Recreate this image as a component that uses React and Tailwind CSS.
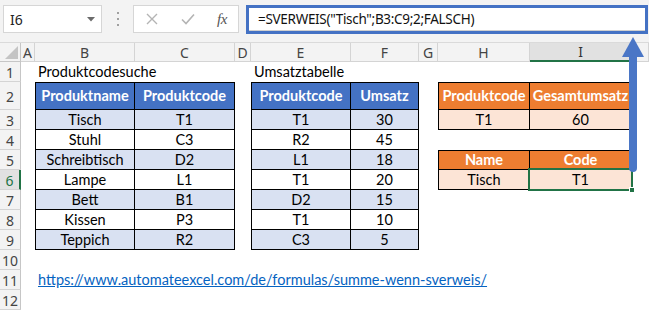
import React from "react";

const COLS = ["A", "B", "C", "D", "E", "F", "G", "H", "I", ""];

// cell content per row (index 0 = column A ... 9 = column J)
const cells = {
  1: { 1: { t: "Produktcodesuche", k: "title" }, 4: { t: "Umsatztabelle", k: "title" } },
  2: {
    1: { t: "Produktname", k: "bh", l: true, top: true },
    2: { t: "Produktcode", k: "bh", top: true },
    4: { t: "Produktcode", k: "bh", l: true, top: true },
    5: { t: "Umsatz", k: "bh", top: true },
    7: { t: "Produktcode", k: "oh", l: true, top: true },
    8: { t: "Gesamtumsatz", k: "oh", top: true },
  },
  3: { 7: { t: "T1", k: "ob", l: true }, 8: { t: "60", k: "ob" } },
  5: {
    7: { t: "Name", k: "oh", l: true, top: true },
    8: { t: "Code", k: "oh", top: true },
  },
  6: { 7: { t: "Tisch", k: "ob", l: true }, 8: { t: "T1", k: "ob", sel: true } },
  11: { 1: { t: "https://www.automateexcel.com/de/formulas/summe-wenn-sverweis/", k: "link" } },
};

const left = [
  ["Tisch", "T1"],
  ["Stuhl", "C3"],
  ["Schreibtisch", "D2"],
  ["Lampe", "L1"],
  ["Bett", "B1"],
  ["Kissen", "P3"],
  ["Teppich", "R2"],
];
const right = [
  ["T1", "30"],
  ["R2", "45"],
  ["L1", "18"],
  ["T1", "20"],
  ["D2", "15"],
  ["T1", "10"],
  ["C3", "5"],
];
left.forEach((r, i) => {
  const row = i + 3;
  const k = i % 2 === 0 ? "b1" : "b2";
  cells[row] = cells[row] || {};
  cells[row][1] = { t: r[0], k, l: true };
  cells[row][2] = { t: r[1], k };
  cells[row][4] = { t: right[i][0], k, l: true };
  cells[row][5] = { t: right[i][1], k };
});

const kindClass = {
  title: "justify-start pl-[3px] text-[#000]",
  link: "justify-start pl-[3px] text-[#0563c1] underline",
  bh: "justify-center bg-[#4472c4] text-white font-bold border-r border-b border-black",
  b1: "justify-center bg-[#d9e1f2] text-black border-r border-b border-black",
  b2: "justify-center bg-white text-black border-r border-b border-black",
  oh: "justify-center bg-[#ed7d31] text-white font-bold border-r border-b border-black",
  ob: "justify-center bg-[#fce4d6] text-black border-r border-b border-black",
};

function Cell({ c }) {
  if (!c) return <div />;
  const cls = [
    "relative flex items-center whitespace-nowrap overflow-visible text-[14.5px] leading-none",
    kindClass[c.k],
    c.l ? "border-l" : "",
    c.top ? "border-t" : "",
    c.k === "bh" || c.k === "oh" || c.k === "b1" || c.k === "b2" || c.k === "ob" ? "pt-[1px]" : "",
  ].join(" ");
  return (
    <div className={cls}>
      <span>{c.t}</span>
      {c.sel && (
        <>
          <div className="absolute -left-[2px] -top-[2px] -right-[2px] -bottom-[2px] border-2 border-[#217346]" />
          <div className="absolute -right-[4px] -bottom-[4px] w-[6px] h-[6px] bg-[#217346] border border-white" />
        </>
      )}
    </div>
  );
}

function Toolbar() {
  return (
    <div className="h-[43px] bg-[#f3f3f3] border-b border-[#dadada] flex items-start pt-[5px] pl-[3px]">
      <div className="w-[99px] h-[28px] bg-white border border-[#d6d6d6] flex items-center justify-between pl-[6px] pr-[6px]">
        <span className="text-[14px] text-[#222] font-['Noto_Sans',sans-serif]">I6</span>
        <svg width="8" height="5" viewBox="0 0 8 5">
          <polygon points="0,0 8,0 4,4.5" fill="#6b6b6b" />
        </svg>
      </div>
      <div className="w-[31px] h-[28px] flex flex-col items-center justify-center gap-[4px]">
        <div className="w-[2px] h-[2px] bg-[#a0a0a0]" />
        <div className="w-[2px] h-[2px] bg-[#a0a0a0]" />
        <div className="w-[2px] h-[2px] bg-[#a0a0a0]" />
      </div>
      <div className="w-[106px] h-[28px] bg-white border border-[#d6d6d6] flex items-center">
        <svg width="12" height="12" viewBox="0 0 12 12" className="ml-[12px]">
          <path d="M1 1 L11 11 M11 1 L1 11" stroke="#b4b4b4" strokeWidth="1.4" fill="none" />
        </svg>
        <svg width="14" height="12" viewBox="0 0 14 12" className="ml-[23px]">
          <path d="M1 6.5 L5 10.5 L13 1.5" stroke="#b4b4b4" strokeWidth="1.6" fill="none" />
        </svg>
        <span className="ml-[22px] text-[15px] italic text-[#555] font-['Liberation_Serif',serif] tracking-[-0.5px]">
          fx
        </span>
      </div>
      <div className="ml-[7px] w-[402px] h-[29px] bg-white border-[3px] border-[#4472c4] flex items-center pl-[9px] shadow-[inset_0_-1px_0_#cfcfcf]">
        <span className="text-[13.5px] text-[#111] font-['Noto_Sans',sans-serif] tracking-[-0.3px]">
          =SVERWEIS("Tisch";B3:C9;2;FALSCH)
        </span>
      </div>
    </div>
  );
}

export default function App() {
  const rows = [1, 2, 3, 4, 5, 6, 7, 8, 9, 10, 11, 12];
  return (
    <div className="relative w-[649px] h-[310px] overflow-hidden bg-white font-['Lato',sans-serif]">
      <Toolbar />
      <div className="grid grid-cols-[21px_14px_100px_100px_16px_100px_68px_19px_92px_102px_17px] grid-rows-[19px_20px_28px_repeat(10,20px)]">
        {/* select-all corner */}
        <div className="relative bg-[#f3f3f3] border-r border-b border-[#c6c6c6]">
          <svg width="13" height="13" viewBox="0 0 13 13" className="absolute right-[2px] bottom-[2px]">
            <polygon points="13,0 13,13 0,13" fill="#c4c4c4" />
          </svg>
        </div>
        {COLS.map((c, i) =>
          c === "I" ? (
            <div
              key={i}
              className="flex items-center justify-center bg-[#e1e1e1] border-r border-[#c6c6c6] border-b-2 border-b-[#217346] text-[14px] text-[#333] font-['Noto_Sans',sans-serif]"
            >
              {c}
            </div>
          ) : (
            <div
              key={i}
              className="flex items-center justify-center bg-[#f3f3f3] border-r border-b border-[#d4d4d4] text-[14px] text-[#444] font-['Noto_Sans',sans-serif]"
            >
              {c}
            </div>
          )
        )}
        {rows.map((r) => (
          <React.Fragment key={r}>
            {r === 6 ? (
              <div className="flex items-center justify-center bg-[#e1e1e1] border-b border-[#d4d4d4] border-r-2 border-r-[#217346] text-[14px] text-[#217346] font-['Noto_Sans',sans-serif] pt-[1px]">
                {r}
              </div>
            ) : (
              <div className="flex items-center justify-center bg-[#f3f3f3] border-b border-[#d4d4d4] border-r border-r-[#c6c6c6] text-[14px] text-[#444] font-['Noto_Sans',sans-serif] pt-[1px]">
                {r}
              </div>
            )}
            {COLS.map((_, ci) => (
              <Cell key={ci} c={cells[r] && cells[r][ci]} />
            ))}
          </React.Fragment>
        ))}
      </div>
      {/* callout arrow pointing at the formula bar */}
      <svg width="30" height="140" viewBox="0 0 30 140" className="absolute left-[619px] top-[35px]">
        <rect x="10" y="18" width="8" height="119" rx="4" fill="#4a76c6" />
        <polygon points="14,2 3,22 25,22" fill="#4a76c6" />
      </svg>
    </div>
  );
}
